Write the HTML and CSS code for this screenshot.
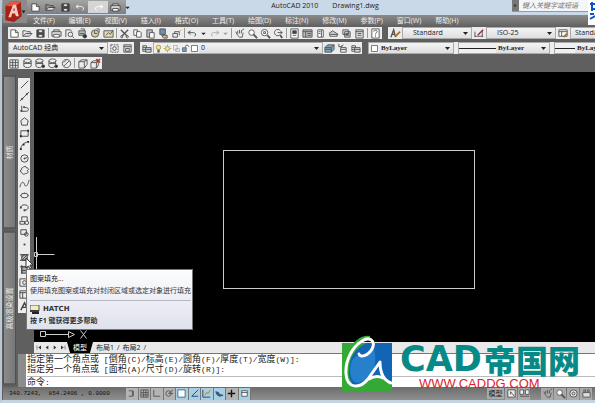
FILE: index.html
```html
<!DOCTYPE html>
<html lang="zh-CN">
<head>
  <meta charset="UTF-8">
  <meta name="viewport" content="width=device-width, initial-scale=1.0">
  <link rel="stylesheet" href="styles.css">
  <title>AutoCAD 2010 Drawing1.dwg</title>
</head>
<body>

  <!-- icon sprite -->
  <svg class="sprite" aria-hidden="true">
    <symbol id="new" viewBox="0 0 12 12"><path d="M2 2h5l3 3v5H2z" fill="#fff"/><path d="M7 2v3h3"/></symbol>
    <symbol id="open" viewBox="0 0 12 12"><path d="M1 9V3h3l1 1h4v2"/><path d="M1 9l3-3h7L8 9z" fill="#ddd"/></symbol>
    <symbol id="save" viewBox="0 0 12 12"><path d="M2 2h8v8H2z" fill="#444"/><path d="M4 2h4v3H4zM4 7h4v3H4z" fill="#eee"/></symbol>
    <symbol id="print" viewBox="0 0 12 12"><path d="M3 4V2h6v2M1 4h10v5H1z" fill="#ddd"/><path d="M3 7h6v3H3z" fill="#fff"/></symbol>
    <symbol id="preview" viewBox="0 0 12 12"><path d="M2 10V2h5l2 2"/><circle cx="7" cy="7" r="2.5"/><path d="M9 9l2 2"/></symbol>
    <symbol id="publish" viewBox="0 0 12 12"><path d="M2 3h7v5H2z" fill="#bbb"/><path d="M4 1h4v2M3 6h5"/><circle cx="8.500" cy="9" r="2" fill="#234"/></symbol>
    <symbol id="dwf" viewBox="0 0 12 12"><circle cx="5.500" cy="6" r="4" fill="#d8cfa8"/><path d="M5 3v3h3M7 1h3v4"/></symbol>
    <symbol id="sheet" viewBox="0 0 12 12"><path d="M1 3h10v7H1z" fill="#e6dcb0"/><path d="M3 8l3-3 2 2 3-5"/></symbol>
    <symbol id="cut" viewBox="0 0 12 12"><path d="M2 2l7 7M10 2L3 9" stroke-width="1.5"/><circle cx="3" cy="9.500" r="1.200"/><circle cx="9" cy="9.500" r="1.200"/></symbol>
    <symbol id="copy" viewBox="0 0 12 12"><path d="M2 2h4v6H2z" fill="#fff"/><path d="M5 4h4l1 1v5H5z" fill="#fff"/></symbol>
    <symbol id="paste" viewBox="0 0 12 12"><path d="M2 2h6v8H2z" fill="#bbb"/><path d="M5 5h5v6H5z" fill="#fff"/></symbol>
    <symbol id="match" viewBox="0 0 12 12"><path d="M2 1h6v6H2z" fill="#6d8fb0"/><path d="M4 8h6v3H6z" fill="#d9c46e"/></symbol>
    <symbol id="block" viewBox="0 0 12 12"><path d="M2 6h5v4H2zM4 6V4h5v4"/><path d="M9 4l2-2" stroke="#c9932d"/></symbol>
    <symbol id="undo" viewBox="0 0 12 12"><path d="M4 3L1 5l3 2M1 5h6c3 0 3 4 1 4"/></symbol>
    <symbol id="redo" viewBox="0 0 12 12"><path d="M8 3l3 2-3 2M11 5H5c-3 0-3 4-1 4"/></symbol>
    <symbol id="down" viewBox="0 0 12 12"><path d="M3 5h6L6 8z" fill="#222" stroke="none"/></symbol>
    <symbol id="pan" viewBox="0 0 12 12"><path d="M2 4l2 4 2 2h3l1-5M4 6V3M6 6V2M8 6V3"/><path d="M8 3l3-2"/></symbol>
    <symbol id="zoom" viewBox="0 0 12 12"><circle cx="5" cy="5" r="3" fill="#fff"/><path d="M7 7l4 4" stroke-width="2"/></symbol>
    <symbol id="zoomwin" viewBox="0 0 12 12"><circle cx="5" cy="5" r="3.500" fill="#fff"/><path d="M4 4h2v2H4z"/><path d="M8 8l3 3" stroke-width="2"/></symbol>
    <symbol id="zoomprev" viewBox="0 0 12 12"><path d="M8 3a3.500 3.500 0 1 0 0 4M5 5h5M8 3l2 2-2 2"/><path d="M8 8l2 3" stroke-width="2"/></symbol>
    <symbol id="props" viewBox="0 0 12 12"><path d="M2 1h8v10H2z" fill="#fff"/><path d="M4 3h4v3H4z" fill="#346"/><path d="M4 8h4"/></symbol>
    <symbol id="center" viewBox="0 0 12 12"><path d="M1 2h10v8H1z" fill="#bbb"/><path d="M1 4h10M4 4v6M6 6h4M6 8h4"/></symbol>
    <symbol id="palette" viewBox="0 0 12 12"><path d="M3 2h6v8H3z" fill="#fff"/><path d="M7 2v8M4 4h2M4 6h2"/></symbol>
    <symbol id="sheetset" viewBox="0 0 12 12"><path d="M1 6l4-3 6 4H2z" fill="#ccc"/><path d="M2 7v2h8V7"/></symbol>
    <symbol id="markup" viewBox="0 0 12 12"><path d="M2 2h6v5H2zM4 4h6v6H4z" fill="#ddd"/><path d="M5 6h4M5 8h4"/></symbol>
    <symbol id="calc" viewBox="0 0 12 12"><path d="M2 2h8v9H2z" fill="#ddd"/><path d="M2 4h8M4 6h4M4 8h4"/></symbol>
    <symbol id="help" viewBox="0 0 12 12"><path d="M2 1h8v10H2z" fill="#fff"/><path d="M4 4c0-2 4-2 4 0 0 1-2 1-2 3M6 8v1.500"/></symbol>
    <symbol id="textstyle" viewBox="0 0 12 12"><path d="M1 10l3-8 2 8M2 7h3" stroke-width="1.500"/><path d="M6 9l5-5" stroke="#a8762a" stroke-width="2"/></symbol>
    <symbol id="dimstyle" viewBox="0 0 12 12"><path d="M1 4v6M1 9h9M9 3v7"/><path d="M4 8l6-6" stroke="#8b3a2a" stroke-width="1.500"/></symbol>
    <symbol id="tablestyle" viewBox="0 0 12 12"><path d="M1 2h9v7H1z" fill="#fff"/><path d="M1 4h9M4 4v5"/><path d="M6 10l4-4" stroke="#a8762a" stroke-width="2"/></symbol>
    <symbol id="gear" viewBox="0 0 12 12"><path d="M2 2h8v8H2z" stroke-dasharray="2 1"/><circle cx="6" cy="6" r="2"/></symbol>
    <symbol id="workspace" viewBox="0 0 12 12"><path d="M2 2h8v8H2z" fill="#ddd"/><path d="M2 4h8M4 6h4v3H4z"/></symbol>
    <symbol id="layers" viewBox="0 0 12 12"><path d="M2 3h4v6H2zM2 5h4M2 7h4"/><path d="M5 5h6v5H5z" fill="#cdd6dc"/><path d="M5 7h6"/></symbol>
    <symbol id="bulb" viewBox="0 0 12 12"><circle cx="6" cy="4.500" r="3" fill="#f4e38a" stroke="#a08a3a"/><path d="M5 8h2v3H5z" fill="#888"/></symbol>
    <symbol id="sun" viewBox="0 0 12 12"><circle cx="6" cy="6" r="2.500" fill="#f4eaa8" stroke="#a08a3a"/><path d="M6 1v2M6 9v2M1 6h2M9 6h2M2.500 2.500l1 1M8.500 8.500l1 1M9.500 2.500l-1 1M3.500 8.500l-1 1" stroke="#a08a3a"/></symbol>
    <symbol id="freeze" viewBox="0 0 12 12"><path d="M2 2h5v6H2zM5 6h5v4H5z" stroke="#aaa"/></symbol>
    <symbol id="lock" viewBox="0 0 12 12"><path d="M2 5h5v5H2z" fill="#6ca3c4"/><path d="M6 5V3c0-2 4-2 4 0v1" stroke="#357"/></symbol>
    <symbol id="swatch" viewBox="0 0 12 12"><path d="M2 2h8v8H2z" fill="#fff"/></symbol>
    <symbol id="stack" viewBox="0 0 12 12"><path d="M1 5l3-3h7v5l-3 3H1z" fill="#7ba6bb"/><path d="M1 5h7l3-3M8 5v5M1 7h7"/></symbol>
    <symbol id="layerprev" viewBox="0 0 12 12"><path d="M2 1v3h4M4 4l3-2M4 5h6v5H4zM4 7h6"/></symbol>
    <symbol id="cube" viewBox="0 0 12 12"><path d="M1 2h9v9H1zM4 2v9M7 2v9M1 5h9M1 8h9"/></symbol>
    <symbol id="cylinder" viewBox="0 0 12 12"><ellipse cx="6" cy="3" rx="4" ry="2"/><path d="M2 3v6c2 2 6 2 8 0V3M2 6h8"/></symbol>
    <symbol id="cylinderdot" viewBox="0 0 12 12"><ellipse cx="5" cy="3" rx="4" ry="2"/><path d="M1 3v6c2 2 5 2 7 0V3M1 6h8"/><circle cx="9" cy="9" r="1.500" fill="#222"/></symbol>
    <symbol id="slice" viewBox="0 0 12 12"><circle cx="6" cy="6" r="4.500"/><path d="M3 9l6-6M3 5l3-3"/></symbol>
    <symbol id="box" viewBox="0 0 12 12"><path d="M2 4l3-2h6v5l-3 4H2zM2 4h6v7M8 4l3-2"/></symbol>
    <symbol id="boxdel" viewBox="0 0 12 12"><path d="M1 5l3-2h5v5l-2 3H1zM1 5h6v6"/><path d="M7 1l4 4M11 1L7 5" stroke="#b02a1a" stroke-width="1.500"/></symbol>

    <symbol id="line" viewBox="0 0 12 12"><path d="M2 10l8-8"/></symbol>
    <symbol id="xline" viewBox="0 0 12 12"><path d="M1 11L11 1"/><path d="M3 8h1v1H3zM8 3h1v1H8z" fill="#222"/></symbol>
    <symbol id="pline" viewBox="0 0 12 12"><path d="M2 9h6c3 0 3-4 0-4H6M3 3v6"/><path d="M5 4h1v1H5zM2 8h1v1H2z" fill="#222"/></symbol>
    <symbol id="polygon" viewBox="0 0 12 12"><path d="M6 2l4 3-1 5H3L2 5z"/></symbol>
    <symbol id="rect" viewBox="0 0 12 12"><path d="M2 3h8v6H2z"/><path d="M1 8h2v2H1zM9 2h2v2H9z" fill="#222" stroke="none"/></symbol>
    <symbol id="arc" viewBox="0 0 12 12"><path d="M2 10c0-4 3-7 8-8"/><path d="M1 9h2v2H1zM9 1h2v2H9zM4 4h2v2H4z" fill="#222" stroke="none"/></symbol>
    <symbol id="circle" viewBox="0 0 12 12"><circle cx="6" cy="6" r="4"/><path d="M6 6l3-1M5.500 5.500h1v1h-1z"/></symbol>
    <symbol id="cloud" viewBox="0 0 12 12"><path d="M4 3c1-2 4-2 4 0 3 0 3 3 1 3 2 2 0 4-2 3-1 2-4 1-4-1-2 0-2-3 0-3-1-1 0-2 1-2z"/></symbol>
    <symbol id="spline" viewBox="0 0 12 12"><path d="M1 10c2-9 5-4 5-3 1 4 4 1 5-5"/></symbol>
    <symbol id="ellipse" viewBox="0 0 12 12"><ellipse cx="6" cy="6" rx="4" ry="2.500"/><path d="M1.500 6h1M9.500 6h1M6 3v1"/></symbol>
    <symbol id="ellipsearc" viewBox="0 0 12 12"><path d="M2 6c0-4 8-4 8 0 0 2-2 3-4 3"/><path d="M5 8h2v2H5zM1 5h2v2H1z" fill="#444" stroke="none"/></symbol>
    <symbol id="insert" viewBox="0 0 12 12"><path d="M3 6V2h6v5M1 7h5v3H1z"/><circle cx="8.500" cy="8.500" r="2"/></symbol>
    <symbol id="makeblock" viewBox="0 0 12 12"><path d="M2 3h6v5H2z"/><circle cx="8" cy="8" r="2"/></symbol>
    <symbol id="point" viewBox="0 0 12 12"><path d="M5 5h2v2H5z" fill="#444" stroke="none"/></symbol>
    <symbol id="hatch" viewBox="0 0 12 12"><path d="M3 3h6v6H3z" fill="#bbb"/><path d="M3 6l3-3M3 9l6-6M6 9l3-3M1 3h10M1 9h10"/></symbol>
    <symbol id="gradient" viewBox="0 0 12 12"><path d="M3 3h6v7H3z" fill="#aaa"/><path d="M1 3h10M3 1v10M3 7h6"/></symbol>
    <symbol id="region" viewBox="0 0 12 12"><path d="M1 2h9v8H1z"/><circle cx="6" cy="6" r="2"/></symbol>
    <symbol id="table" viewBox="0 0 12 12"><path d="M1 2h10v8H1zM1 4h10M4 4v6"/></symbol>
    <symbol id="mtext" viewBox="0 0 12 12"><path d="M2 10l4-8 4 8M4 7h4" stroke-width="1.500"/></symbol>

    <symbol id="snap" viewBox="0 0 12 12"><path d="M3 3h4v6H3M8 3v6"/></symbol>
    <symbol id="grid" viewBox="0 0 12 12"><path d="M2 2h8v8H2zM2 5h8M2 7.500h8M5 2v8M7.500 2v8"/></symbol>
    <symbol id="ortho" viewBox="0 0 12 12"><path d="M3 2v7h7"/></symbol>
    <symbol id="polar" viewBox="0 0 12 12"><circle cx="5" cy="6" r="3"/><path d="M5 6l5-4M5 6h5"/></symbol>
    <symbol id="osnap" viewBox="0 0 12 12"><path d="M2 2h8v8H2z" fill="#fff" stroke="#468"/></symbol>
    <symbol id="otrack" viewBox="0 0 12 12"><path d="M10 2L3 9h7" stroke="#247"/></symbol>
    <symbol id="ducs" viewBox="0 0 12 12"><path d="M2 2v8h8" stroke="#247"/><path d="M4 8l2-3 2 1 2-4" stroke="#c70"/></symbol>
    <symbol id="dyn" viewBox="0 0 12 12"><path d="M2 4l3 1 1 2 4 1-4 1-3-2z" fill="#357" stroke="#357"/></symbol>
    <symbol id="plus" viewBox="0 0 12 12"><path d="M6 2v8M2 6h8" stroke="#111" stroke-width="1.500"/></symbol>
    <symbol id="qp" viewBox="0 0 12 12"><path d="M3 3h6v6H3z" fill="#fff"/><path d="M3 5h6"/></symbol>
    <symbol id="quickview" viewBox="0 0 12 12"><path d="M2 2h8v8H2z" fill="#eee"/><path d="M5 4l4 5M5 4v3"/></symbol>
    <symbol id="layouts" viewBox="0 0 12 12"><path d="M1 2h4v5H1zM7 2h4v5H7z" fill="#eee"/><path d="M1 9h10"/></symbol>
    <symbol id="wheel" viewBox="0 0 12 12"><circle cx="6" cy="6" r="4" fill="#ddd"/><circle cx="6" cy="6" r="1.500"/></symbol>
    <symbol id="motion" viewBox="0 0 12 12"><path d="M2 5h8v5H2zM3 2h2v2H3zM7 2h2v2H7z" fill="#ddd"/></symbol>
    <symbol id="first" viewBox="0 0 12 12"><path d="M3 3v6"/><path d="M9 3v6L5 6z" fill="#333" stroke="none"/></symbol>
    <symbol id="prev" viewBox="0 0 12 12"><path d="M8 3v6L4 6z" fill="#333" stroke="none"/></symbol>
    <symbol id="next" viewBox="0 0 12 12"><path d="M4 3v6l4-3z" fill="#333" stroke="none"/></symbol>
    <symbol id="last" viewBox="0 0 12 12"><path d="M9 3v6"/><path d="M3 3v6l4-3z" fill="#333" stroke="none"/></symbol>
  </svg>

  <div class="app">
    <header class="titlebar">
      <button class="app-button" aria-label="应用程序菜单">
        <svg viewBox="0 0 24 24">
          <path d="M2 6l7-5 9 1 1 15-8 6-9-2z" fill="#a81f14"/>
          <path d="M2 6l7-5 9 1-6 5z" fill="#e0584a"/>
          <path d="M5 18L10 5h3l3 12h-3l-1-3H9l-1 4z" fill="#f4c9c0"/>
          <path d="M10 11l1-3 1 3z" fill="#a81f14"/>
          <path d="M19 11h4l-2 3z" fill="#222"/>
        </svg>
      </button>
      <div class="quick">
        <button class="tool" aria-label="新建"><svg><use href="#new"/></svg></button>
        <button class="tool" aria-label="打开"><svg><use href="#open"/></svg></button>
        <button class="tool" aria-label="保存"><svg><use href="#save"/></svg></button>
        <button class="tool light" aria-label="放弃"><svg><use href="#undo"/></svg></button>
        <button class="tool redo" aria-label="重做"><svg><use href="#redo"/></svg></button>
        <button class="tool" aria-label="打印"><svg><use href="#print"/></svg></button>
        <button class="drop" aria-label="自定义"><svg><use href="#down"/></svg></button>
      </div>
      <h1 class="title"><span>AutoCAD 2010</span><span>Drawing1.dwg</span></h1>
      <div class="search">
        <button class="search-toggle" aria-label="展开"><svg><use href="#next"/></svg></button>
        <input type="text" aria-label="搜索" placeholder="键入关键字或短语">
      </div>
    </header>

    <nav class="menu">
      <button>文件(F)</button>
      <button>编辑(E)</button>
      <button>视图(V)</button>
      <button>插入(I)</button>
      <button>格式(O)</button>
      <button>工具(T)</button>
      <button>绘图(D)</button>
      <button>标注(N)</button>
      <button>修改(M)</button>
      <button>参数(P)</button>
      <button>窗口(W)</button>
      <button>帮助(H)</button>
    </nav>

    <div class="toolbars">
      <div class="row">
        <div class="toolbar">
          <button class="tool" aria-label="新建"><svg><use href="#new"/></svg></button>
          <button class="tool" aria-label="打开"><svg><use href="#open"/></svg></button>
          <button class="tool" aria-label="保存"><svg><use href="#save"/></svg></button>
          <i class="sep"></i>
          <button class="tool" aria-label="打印"><svg><use href="#print"/></svg></button>
          <button class="tool" aria-label="打印预览"><svg><use href="#preview"/></svg></button>
          <button class="tool" aria-label="发布"><svg><use href="#publish"/></svg></button>
          <button class="tool" aria-label="三维DWF"><svg><use href="#dwf"/></svg></button>
          <button class="tool" aria-label="图纸"><svg><use href="#sheet"/></svg></button>
          <i class="sep"></i>
          <button class="tool" aria-label="剪切"><svg><use href="#cut"/></svg></button>
          <button class="tool" aria-label="复制"><svg><use href="#copy"/></svg></button>
          <button class="tool" aria-label="粘贴"><svg><use href="#paste"/></svg></button>
          <button class="tool" aria-label="特性匹配"><svg><use href="#match"/></svg></button>
          <button class="tool" aria-label="块编辑器"><svg><use href="#block"/></svg></button>
          <i class="sep"></i>
          <button class="tool" aria-label="放弃"><svg><use href="#undo"/></svg></button>
          <button class="drop" aria-label="放弃列表"><svg><use href="#down"/></svg></button>
          <button class="tool faded" aria-label="重做"><svg><use href="#redo"/></svg></button>
          <button class="drop faded" aria-label="重做列表"><svg><use href="#down"/></svg></button>
          <i class="sep"></i>
          <button class="tool" aria-label="平移"><svg><use href="#pan"/></svg></button>
          <button class="tool" aria-label="缩放"><svg><use href="#zoom"/></svg></button>
          <button class="tool" aria-label="窗口缩放"><svg><use href="#zoomwin"/></svg></button>
          <button class="tool" aria-label="上一个"><svg><use href="#zoomprev"/></svg></button>
          <i class="sep"></i>
          <button class="tool" aria-label="特性"><svg><use href="#props"/></svg></button>
          <button class="tool" aria-label="设计中心"><svg><use href="#center"/></svg></button>
          <button class="tool" aria-label="工具选项板"><svg><use href="#palette"/></svg></button>
          <button class="tool" aria-label="图纸集"><svg><use href="#sheetset"/></svg></button>
          <button class="tool" aria-label="标记集"><svg><use href="#markup"/></svg></button>
          <button class="tool" aria-label="计算器"><svg><use href="#calc"/></svg></button>
          <i class="sep"></i>
          <button class="tool" aria-label="帮助"><svg><use href="#help"/></svg></button>
        </div>
        <div class="toolbar styles">
          <button class="tool" aria-label="文字样式"><svg><use href="#textstyle"/></svg></button>
          <select class="combo" aria-label="文字样式列表"><option>Standard</option></select>
          <button class="tool" aria-label="标注样式"><svg><use href="#dimstyle"/></svg></button>
          <select class="combo" aria-label="标注样式列表"><option>ISO-25</option></select>
          <button class="tool" aria-label="表格样式"><svg><use href="#tablestyle"/></svg></button>
          <select class="combo table-style" aria-label="表格样式列表"><option>Standard</option></select>
        </div>
      </div>

      <div class="row">
        <div class="toolbar">
          <select class="combo workspace" aria-label="工作空间"><option>AutoCAD 经典</option></select>
          <button class="tool" aria-label="工作空间设置"><svg><use href="#gear"/></svg></button>
          <button class="tool" aria-label="我的工作空间"><svg><use href="#workspace"/></svg></button>
        </div>
        <div class="toolbar">
          <button class="tool" aria-label="图层特性"><svg><use href="#layers"/></svg></button>
          <div class="layer">
            <svg><use href="#bulb"/></svg>
            <svg><use href="#sun"/></svg>
            <svg><use href="#freeze"/></svg>
            <svg><use href="#lock"/></svg>
            <svg><use href="#swatch"/></svg>
            <select class="combo" aria-label="图层"><option>0</option></select>
          </div>
          <button class="tool" aria-label="置为当前"><svg><use href="#stack"/></svg></button>
          <button class="tool" aria-label="上一个图层"><svg><use href="#layerprev"/></svg></button>
          <button class="tool" aria-label="图层状态"><svg><use href="#layers"/></svg></button>
        </div>
        <div class="toolbar properties">
          <div class="layer color">
            <svg><use href="#swatch"/></svg>
            <select class="combo" aria-label="颜色"><option>ByLayer</option></select>
          </div>
          <div class="layer">
            <i class="stroke"></i>
            <select class="combo" aria-label="线型"><option>ByLayer</option></select>
          </div>
          <div class="layer">
            <i class="stroke short"></i>
            <select class="combo" aria-label="线宽"><option>ByLayer</option></select>
          </div>
        </div>
      </div>

      <div class="row">
        <div class="toolbar">
          <button class="tool" aria-label="长方体"><svg><use href="#cube"/></svg></button>
          <button class="tool" aria-label="圆柱体"><svg><use href="#cylinder"/></svg></button>
          <button class="tool" aria-label="并集"><svg><use href="#cylinderdot"/></svg></button>
          <button class="tool" aria-label="差集"><svg><use href="#cylinderdot"/></svg></button>
          <button class="tool" aria-label="剖切"><svg><use href="#slice"/></svg></button>
          <i class="sep"></i>
          <button class="tool" aria-label="编辑"><svg><use href="#box"/></svg></button>
          <button class="tool" aria-label="删除"><svg><use href="#boxdel"/></svg></button>
        </div>
      </div>
    </div>

    <main class="workarea">
      <aside class="palettes">
        <button class="palette">材质</button>
        <button class="palette">高级渲染设置</button>
      </aside>

      <div class="draw-column">
        <div class="draw">
          <button class="tool" aria-label="直线"><svg><use href="#line"/></svg></button>
          <button class="tool" aria-label="构造线"><svg><use href="#xline"/></svg></button>
          <button class="tool" aria-label="多段线"><svg><use href="#pline"/></svg></button>
          <button class="tool" aria-label="多边形"><svg><use href="#polygon"/></svg></button>
          <button class="tool" aria-label="矩形"><svg><use href="#rect"/></svg></button>
          <button class="tool" aria-label="圆弧"><svg><use href="#arc"/></svg></button>
          <button class="tool" aria-label="圆"><svg><use href="#circle"/></svg></button>
          <button class="tool" aria-label="修订云线"><svg><use href="#cloud"/></svg></button>
          <button class="tool" aria-label="样条曲线"><svg><use href="#spline"/></svg></button>
          <button class="tool" aria-label="椭圆"><svg><use href="#ellipse"/></svg></button>
          <button class="tool" aria-label="椭圆弧"><svg><use href="#ellipsearc"/></svg></button>
          <button class="tool" aria-label="插入块"><svg><use href="#insert"/></svg></button>
          <button class="tool" aria-label="创建块"><svg><use href="#makeblock"/></svg></button>
          <button class="tool" aria-label="点"><svg><use href="#point"/></svg></button>
          <button class="tool" aria-label="图案填充"><svg><use href="#hatch"/></svg></button>
          <button class="tool" aria-label="渐变色"><svg><use href="#gradient"/></svg></button>
          <button class="tool" aria-label="面域"><svg><use href="#region"/></svg></button>
          <button class="tool" aria-label="表格"><svg><use href="#table"/></svg></button>
          <button class="tool" aria-label="多行文字"><svg><use href="#mtext"/></svg></button>
        </div>

        <svg class="cursor" viewBox="0 0 9 13"><path d="M1 1v10l2.500-2 1.500 3 1.500-1-1.500-3H8z" fill="#fff" stroke="#333"/></svg>

        <div class="tooltip" role="tooltip">
          <p class="tip-title">图案填充...</p>
          <p>使用填充图案或填充对封闭区域或选定对象进行填充</p>
          <div class="tip-foot">
            <p class="tip-command">
              <svg viewBox="0 0 10 9"><path d="M0 0h9v5H0z" fill="#f3edbd"/><path d="M0 5h9v4H2V7H0z" fill="#222"/><path d="M0 0h9v6H0z" fill="none" stroke="#555"/></svg>
              HATCH
            </p>
            <p class="tip-help">按 F1 键获得更多帮助</p>
          </div>
        </div>
      </div>

      <div class="drawing">
        <svg class="canvas" aria-label="绘图区">
          <rect x="189.500" y="78.500" width="251" height="138"/>
          <path d="M2.500 165v34M2.500 182.500h18M.500 180.500h3v4h-3z"/>
          <path d="M6.500 259.500h5v5h-5zM11.500 262.500h23M34.500 259.500l6 3-6 3z"/>
          <path d="M46.500 258.500l6 8M52.500 258.500l-6 8"/>
        </svg>
        <div class="tabs">
          <button class="nav" aria-label="第一个"><svg><use href="#first"/></svg></button>
          <button class="nav" aria-label="上一个"><svg><use href="#prev"/></svg></button>
          <button class="nav" aria-label="下一个"><svg><use href="#next"/></svg></button>
          <button class="nav" aria-label="最后一个"><svg><use href="#last"/></svg></button>
          <button class="tab active">模型</button>
          <button class="tab">布局1</button>
          <button class="tab">布局2</button>
        </div>
      </div>

      <section class="command">
        <p>指定第一个角点或<kbd> [</kbd>倒角<kbd>(C)/</kbd>标高<kbd>(E)/</kbd>圆角<kbd>(F)/</kbd>厚度<kbd>(T)/</kbd>宽度<kbd>(W)]:</kbd></p>
        <p>指定另一个角点或<kbd> [</kbd>面积<kbd>(A)/</kbd>尺寸<kbd>(D)/</kbd>旋转<kbd>(R)]:</kbd></p>
        <div class="prompt">
          <label for="cmd">命令<kbd>:</kbd></label>
          <input id="cmd" type="text">
        </div>
      </section>
    </main>

    <footer class="status">
      <span class="coords">340.7243,&nbsp; 854.2406 , 0.0000</span>
      <div class="toggles">
        <button class="tool" aria-label="捕捉"><svg><use href="#snap"/></svg></button>
        <button class="tool" aria-label="栅格"><svg><use href="#grid"/></svg></button>
        <button class="tool" aria-label="正交"><svg><use href="#ortho"/></svg></button>
        <button class="tool" aria-label="极轴"><svg><use href="#polar"/></svg></button>
        <button class="tool on" aria-label="对象捕捉"><svg><use href="#osnap"/></svg></button>
        <button class="tool on" aria-label="对象追踪"><svg><use href="#otrack"/></svg></button>
        <button class="tool on" aria-label="动态UCS"><svg><use href="#ducs"/></svg></button>
        <button class="tool on" aria-label="动态输入"><svg><use href="#dyn"/></svg></button>
        <button class="tool" aria-label="线宽"><svg><use href="#plus"/></svg></button>
        <button class="tool on" aria-label="快捷特性"><svg><use href="#qp"/></svg></button>
      </div>
      <div class="views">
        <button class="model">模型</button>
        <button class="tool" aria-label="快速查看图形"><svg><use href="#quickview"/></svg></button>
        <button class="tool" aria-label="快速查看布局"><svg><use href="#layouts"/></svg></button>
        <i class="sep"></i>
        <button class="tool" aria-label="平移"><svg><use href="#pan"/></svg></button>
        <button class="tool" aria-label="缩放"><svg><use href="#zoom"/></svg></button>
        <button class="tool" aria-label="控制盘"><svg><use href="#wheel"/></svg></button>
        <button class="tool" aria-label="运动"><svg><use href="#motion"/></svg></button>
      </div>
    </footer>

    <svg class="corner" viewBox="0 0 7 25" aria-hidden="true"><path d="M0 0h7v25H0z" fill="#fff"/><path d="M2 4h5M3 9h4M2 14h4M4 2v9M2 19l5-3" stroke="#1254c4" stroke-width="2" fill="none"/></svg>

    <div class="brand">
      <svg class="brand-logo" viewBox="0 0 50 58">
        <path d="M0 9h50v49H0z" fill="#35a936"/>
        <path d="M25 9h25v43l-7-8-18 0-9 9C9 51 6 44 7 36 7 24 13 14 25 9z" fill="#1265b4"/>
        <path d="M9 42c-3-12 3-23 11-20 5 0 9-3 12-8 3 14 1 26-9 32-6 4-12 4-14-4z" fill="#2680cc"/>
        <path d="M6 19C12 8 20 2 28 3" fill="none" stroke="#35a936" stroke-width="2"/>
        <path d="M17 20c1 4 9 2 13-5 4-8-2-13-10-8C10 13 3 27 4 40c1 15 14 15 22 5l12-17c0 9 3 18 11 21M27 45c5-3 10-3 14-1" fill="none" stroke="#fff" stroke-width="3" stroke-linecap="round" stroke-linejoin="round"/>
      </svg>
      <div class="brand-text">
        <strong><span>CAD</span>帝国网</strong>
        <a href="#">WWW.CADDG.COM</a>
      </div>
    </div>
  </div>

</body>
</html>
```

FILE: styles.css
```css
* {
  box-sizing: border-box;
}

body {
  margin: 0;
  font-family: "Open Sans", "Noto Sans CJK SC", sans-serif;
  font-size: 7px;
  color: #222;
}

button,
input,
select {
  font: inherit;
  color: inherit;
  border: none;
  padding: 0;
  margin: 0;
  background: none;
}

p {
  margin: 0;
}

.sprite {
  position: absolute;
  width: 0;
  height: 0;
}

.sprite symbol {
  fill: none;
}

.app {
  position: relative;
  display: flex;
  flex-direction: column;
  min-height: 100vh;
  overflow: hidden;
  background: #5f5f5f;
  border-left: 2px solid #b9c9d6;
  border-bottom: 3px solid #c3d3e0;
}

.tool {
  display: flex;
  align-items: center;
  justify-content: center;
  flex: none;
  width: 13px;
  height: 12px;
}

.tool svg,
.drop svg,
.nav svg,
.search-toggle svg,
.layer svg {
  display: block;
  flex: none;
  width: 11px;
  height: 11px;
  fill: none;
  stroke: #555;
}

.drop {
  width: 9px;
  height: 12px;
  flex: none;
}

.drop svg {
  width: 9px;
}

.faded {
  opacity: 0.4;
}

.sep {
  flex: none;
  width: 1px;
  height: 10px;
  margin: 0 1px;
  background: #999;
}

/* title bar */
.titlebar {
  display: flex;
  align-items: flex-start;
  height: 15px;
  background: #c9d9e8;
}

.app-button {
  position: absolute;
  z-index: 2;
  left: 1px;
  top: 0;
  width: 24px;
  height: 23px;
  background: #8a8a8a;
}

.app-button svg {
  display: block;
  width: 24px;
  height: 23px;
}

.quick {
  display: flex;
  align-items: center;
  width: 124px;
  height: 14px;
  padding-left: 26px;
  background: linear-gradient(#a4a4a4, #7e7e7e);
}

.quick .tool {
  width: 15px;
}

.quick .tool svg {
  stroke: #444;
}

.quick .light svg {
  stroke: #eee;
}

.quick .redo {
  width: 20px;
  background: #d5d5d5;
}

.quick .redo svg {
  stroke: #fff;
}

.title {
  display: flex;
  flex: 1;
  justify-content: center;
  gap: 14px;
  margin: 0;
  padding-left: 12px;
  font-size: 7px;
  font-weight: normal;
  line-height: 11px;
}

.search {
  display: flex;
  width: 83px;
  height: 12px;
  background: #f4f6f8;
  border-bottom: 1px solid #999;
}

.search-toggle {
  width: 7px;
  background: #777;
}

.search-toggle svg {
  width: 7px;
  stroke: none;
}

.search input {
  flex: 1;
  min-width: 0;
  padding-left: 3px;
  font-style: italic;
}

.search input::placeholder {
  color: #777;
}

.corner {
  position: absolute;
  right: 0;
  top: 0;
  width: 7px;
  height: 25px;
}

/* menu */
.menu {
  display: flex;
  align-items: center;
  justify-content: space-between;
  height: 12px;
  padding: 0 23% 0 31px;
  background: linear-gradient(#8b8b8b, #5f5f5f);
}

.menu button {
  white-space: nowrap;
  line-height: 10px;
  color: #eee;
}

/* toolbars */
.toolbars {
  display: flex;
  flex-direction: column;
  gap: 3px;
  padding: 0 0 3px 6px;
}

.row {
  display: flex;
  gap: 6px;
  height: 12px;
}

.toolbar {
  display: flex;
  align-items: center;
  flex: none;
  background: #ececec;
}

.combo {
  appearance: none;
  height: 12px;
  padding: 0 10px;
  line-height: 10px;
  color: #222;
  border: 1px solid #aaa;
  border-radius: 0;
  background-image: url("data:image/svg+xml,%3Csvg xmlns='http://www.w3.org/2000/svg' viewBox='0 0 5 3'%3E%3Cpath d='M0 0h5L2.500 3z' fill='%23222'/%3E%3C/svg%3E"), linear-gradient(#f4f4f4, #dedede);
  background-repeat: no-repeat;
  background-position: right 3px center, 0 0;
  background-size: 5px 3px, auto;
}

.toolbar.styles,
.toolbar.properties {
  flex: 1 0 0;
  min-width: 0;
  overflow: hidden;
}

.styles .combo {
  flex: none;
  width: 70px;
}

.styles .table-style {
  padding-left: 4px;
}

.styles .tool {
  width: 14px;
}

.workspace {
  width: 100px;
  padding: 0 4px;
}

.layer {
  display: flex;
  align-items: center;
  width: 170px;
  height: 12px;
  background: #f0f0f0;
  border: 1px solid #aaa;
}

.layer svg {
  width: 9px;
  height: 9px;
}

.layer .combo {
  flex: 1;
  min-width: 0;
  height: 10px;
  padding: 0 2px;
  border: none;
}

.properties {
  gap: 4px;
  font-family: "Liberation Serif", serif;
}

.properties .layer {
  flex: none;
  width: 92px;
}

.properties .color {
  width: 86px;
  padding-left: 1px;
}

.properties .combo {
  font-weight: bold;
}

.stroke {
  width: 37px;
  height: 1px;
  background: #222;
}

.stroke.short {
  width: 20px;
}

/* palettes, drawing area and command line */
.workarea {
  flex: 1;
  display: grid;
  grid-template-columns: 16px 16px 1fr;
  grid-template-rows: 1fr auto;
}

.palettes {
  grid-row: 1 / 3;
  display: flex;
  flex-direction: column;
  gap: 3px;
  padding: 4px 2px 3px 1px;
}

.palette {
  flex: 1;
  writing-mode: vertical-rl;
  text-orientation: sideways;
  transform: rotate(180deg);
  line-height: 12px;
  text-align: center;
  color: #eee;
  background: linear-gradient(90deg, #777, #8c8c8c);
  border: 1px solid #505050;
}

.draw-column {
  position: relative;
}

.draw {
  display: flex;
  flex-direction: column;
  justify-content: space-between;
  width: 12px;
  min-height: 235px;
  margin-top: 6px;
  background: #ececec;
}

.draw .tool {
  width: 12px;
  height: 12px;
}

.draw .tool svg {
  stroke: #444;
}

.cursor {
  position: absolute;
  z-index: 4;
  left: 7px;
  top: 185px;
  width: 9px;
  height: 13px;
}

.tooltip {
  position: absolute;
  z-index: 3;
  left: 8px;
  top: 197px;
  width: max-content;
  padding: 3px 1px 2px 3px;
  line-height: 12px;
  color: #333;
  background: linear-gradient(#fdfdfe, #dfe1ec);
  border: 1px solid #767676;
}

.tip-title {
  color: #111;
}

.tip-foot {
  margin-top: 3px;
  padding-top: 2px;
  border-top: 1px solid #b4b6c2;
}

.tip-command {
  display: flex;
  align-items: center;
  gap: 3px;
  font-family: "DejaVu Sans", sans-serif;
  font-weight: bold;
}

.tip-command svg {
  width: 10px;
  height: 9px;
}

.tip-help {
  font-weight: bold;
}

.drawing {
  display: flex;
  flex-direction: column;
  background: #000;
}

.canvas {
  flex: 1;
  width: 100%;
  min-height: 0;
  height: 0;
  fill: none;
  stroke: #ccc;
}

.tabs {
  display: flex;
  align-items: center;
  height: 12px;
  padding-left: 1px;
  background: #e9e9e9;
  border-bottom: 1px solid #777;
}

.nav,
.nav svg {
  width: 8px;
  height: 11px;
}

.tab {
  height: 11px;
  padding-left: 3px;
  font-size: 7px;
  line-height: 11px;
}

.tab::after {
  content: "/";
  padding-left: 3px;
}

.tab.active {
  padding: 0 6px;
  color: #fff;
  background: #000;
  clip-path: polygon(0 0, 100% 0, 88% 100%, 12% 100%);
}

.tab.active::after {
  content: none;
}

.command {
  grid-column: 2 / 4;
  padding-left: 9px;
  font-family: "Noto Sans CJK SC", sans-serif;
  font-size: 9px;
  line-height: 10px;
  background: linear-gradient(90deg, #8c8c8c 8px, #fff 8px);
}

.command p {
  height: 10px;
}

.command kbd {
  font-family: "Liberation Mono", monospace;
  font-size: 8px;
  line-height: 8px;
  white-space: pre;
}

.prompt {
  display: flex;
  height: 11px;
  margin-top: 2px;
  border-top: 1px solid #bbb;
}

.prompt input {
  flex: 1;
}

/* status bar */
.status {
  display: flex;
  align-items: center;
  height: 13px;
  margin-left: 1px;
  padding: 0 3px 0 6px;
  background: linear-gradient(#6c6c6c, #8f8f8f);
}

.coords {
  width: 117px;
  font-family: "Liberation Mono", monospace;
  font-size: 6px;
  color: #111;
}

.toggles,
.views {
  display: flex;
  align-items: center;
}

.toggles {
  width: 125px;
}

.toggles .tool {
  flex: 1;
  border-right: 1px solid #777;
  background: #b4b4b4;
}

.toggles .on {
  background: #a9cfe3;
}

.views {
  margin-left: auto;
}

.views .tool {
  width: 12px;
  margin-left: 1px;
  background: #aaa;
}

.views .sep {
  width: 8px;
  background: none;
}

.model {
  width: 17px;
  line-height: 11px;
  background: #aaa;
}

/* site mark over the drawing */
.brand {
  position: absolute;
  z-index: 5;
  right: 15px;
  bottom: 8px;
  display: flex;
  gap: 8px;
}

.brand-logo {
  width: 50px;
  height: 58px;
}

.brand-text {
  display: flex;
  flex-direction: column;
  padding-top: 8px;
  width: 180px;
}

.brand-text strong {
  display: flex;
  justify-content: space-between;
  font-family: "Noto Sans CJK SC", sans-serif;
  font-size: 32px;
  font-weight: 900;
  line-height: 34px;
  white-space: nowrap;
  color: #078a87;
}

.brand-text strong span {
  font-family: "DejaVu Sans", sans-serif;
  font-size: 35px;
  font-weight: bold;
}

.brand-text a {
  padding-left: 19px;
  font-family: "Liberation Sans", sans-serif;
  font-size: 13px;
  line-height: 16px;
  color: #d81e2c;
  text-decoration: none;
}
```
